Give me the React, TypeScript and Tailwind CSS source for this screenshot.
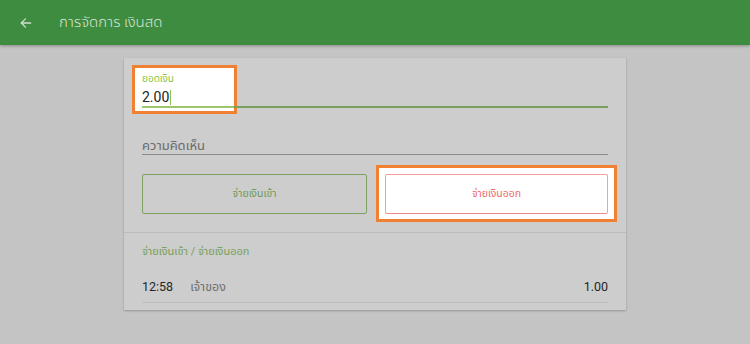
import React from "react";

const font = { fontFamily: '"Roboto", "Noto Sans", "Noto Sans Thai", sans-serif' };

export default function App() {
  return (
    <div className="w-[750px] h-[344px] bg-[#c4c4c4] overflow-hidden" style={font}>
      <header className="h-[45px] bg-[#3d8c40] flex items-center shadow-[0_1px_3px_rgba(0,0,0,0.3)] relative z-10">
        <svg className="ml-[19px]" width="14" height="14" viewBox="0 0 24 24" fill="none" stroke="#cfe0cf" strokeWidth="2.2" strokeLinecap="round" strokeLinejoin="round">
          <path d="M20 12H4" />
          <path d="M11 5l-7 7 7 7" />
        </svg>
        <span className="ml-[26px] text-[15px] text-[#d6e4d6] leading-none font-light">การจัดการ เงินสด</span>
      </header>

      <div className="ml-[124px] mt-[13px] w-[502px] h-[252px] bg-[#cdcdcd] shadow-[0_1px_2px_rgba(0,0,0,0.25)] flex flex-col">
        {/* amount field */}
        <div className="px-[18px]">
          <div className="relative pt-[15px]">
            <div className="absolute left-[-10px] top-[7px] w-[105px] h-[49px] border-[3px] border-[#f08132] bg-white" />
            <div className="relative text-[10px] leading-[12px] text-[#8bc34a]">ยอดเงิน</div>
            <div className="relative mt-[4px] text-[14px] leading-[17px] text-[#222] flex items-center">
              2.00<span className="inline-block w-[1px] h-[15px] bg-[#8bc34a] ml-[1px]" />
            </div>
            <div className="relative h-[2px] bg-[#7a9f5c]">
              <div className="h-[2px] w-[92px] bg-[#9cc76c]" />
            </div>
          </div>
        </div>

        {/* comment field */}
        <div className="px-[18px] mt-[30px]">
          <div className="text-[13px] leading-[16px] text-[#6b6b6b]">ความคิดเห็น</div>
          <div className="h-[1px] bg-[#8a8a8a]" />
        </div>

        {/* buttons */}
        <div className="px-[18px] mt-[19px] flex gap-[18px]">
          <div className="flex-1 h-[40px] border border-[#7ea262] rounded-[2px] flex items-center justify-center text-[10.5px] text-[#6f9a58]">
            จ่ายเงินเข้า
          </div>
          <div className="flex-1 -m-[9px] -mb-[8px] p-[6px] pb-[5px] border-[3px] border-[#f08132] bg-white">
            <div className="h-[40px] border border-[#f3a19c] border-b-[#ef8a84] rounded-[2px] flex items-center justify-center text-[10.5px] text-[#f06b6b]">
              จ่ายเงินออก
            </div>
          </div>
        </div>

        <div className="mt-[18px] h-[1px] bg-[#bcbcbc]" />

        <div className="px-[18px] pt-[12px] text-[11px] leading-[14px] text-[#76a05a]">จ่ายเงินเข้า / จ่ายเงินออก</div>

        <div className="px-[18px]">
          <div className="mt-[20px] flex items-center text-[12.5px] leading-[16px]">
            <span className="text-[#262626]">12:58</span>
            <span className="ml-[17px] text-[#707070]">เจ้าของ</span>
            <span className="ml-auto text-[#262626]">1.00</span>
          </div>
          <div className="mt-[7px] h-[1px] bg-[#bfbfbf]" />
        </div>
      </div>
    </div>
  );
}
